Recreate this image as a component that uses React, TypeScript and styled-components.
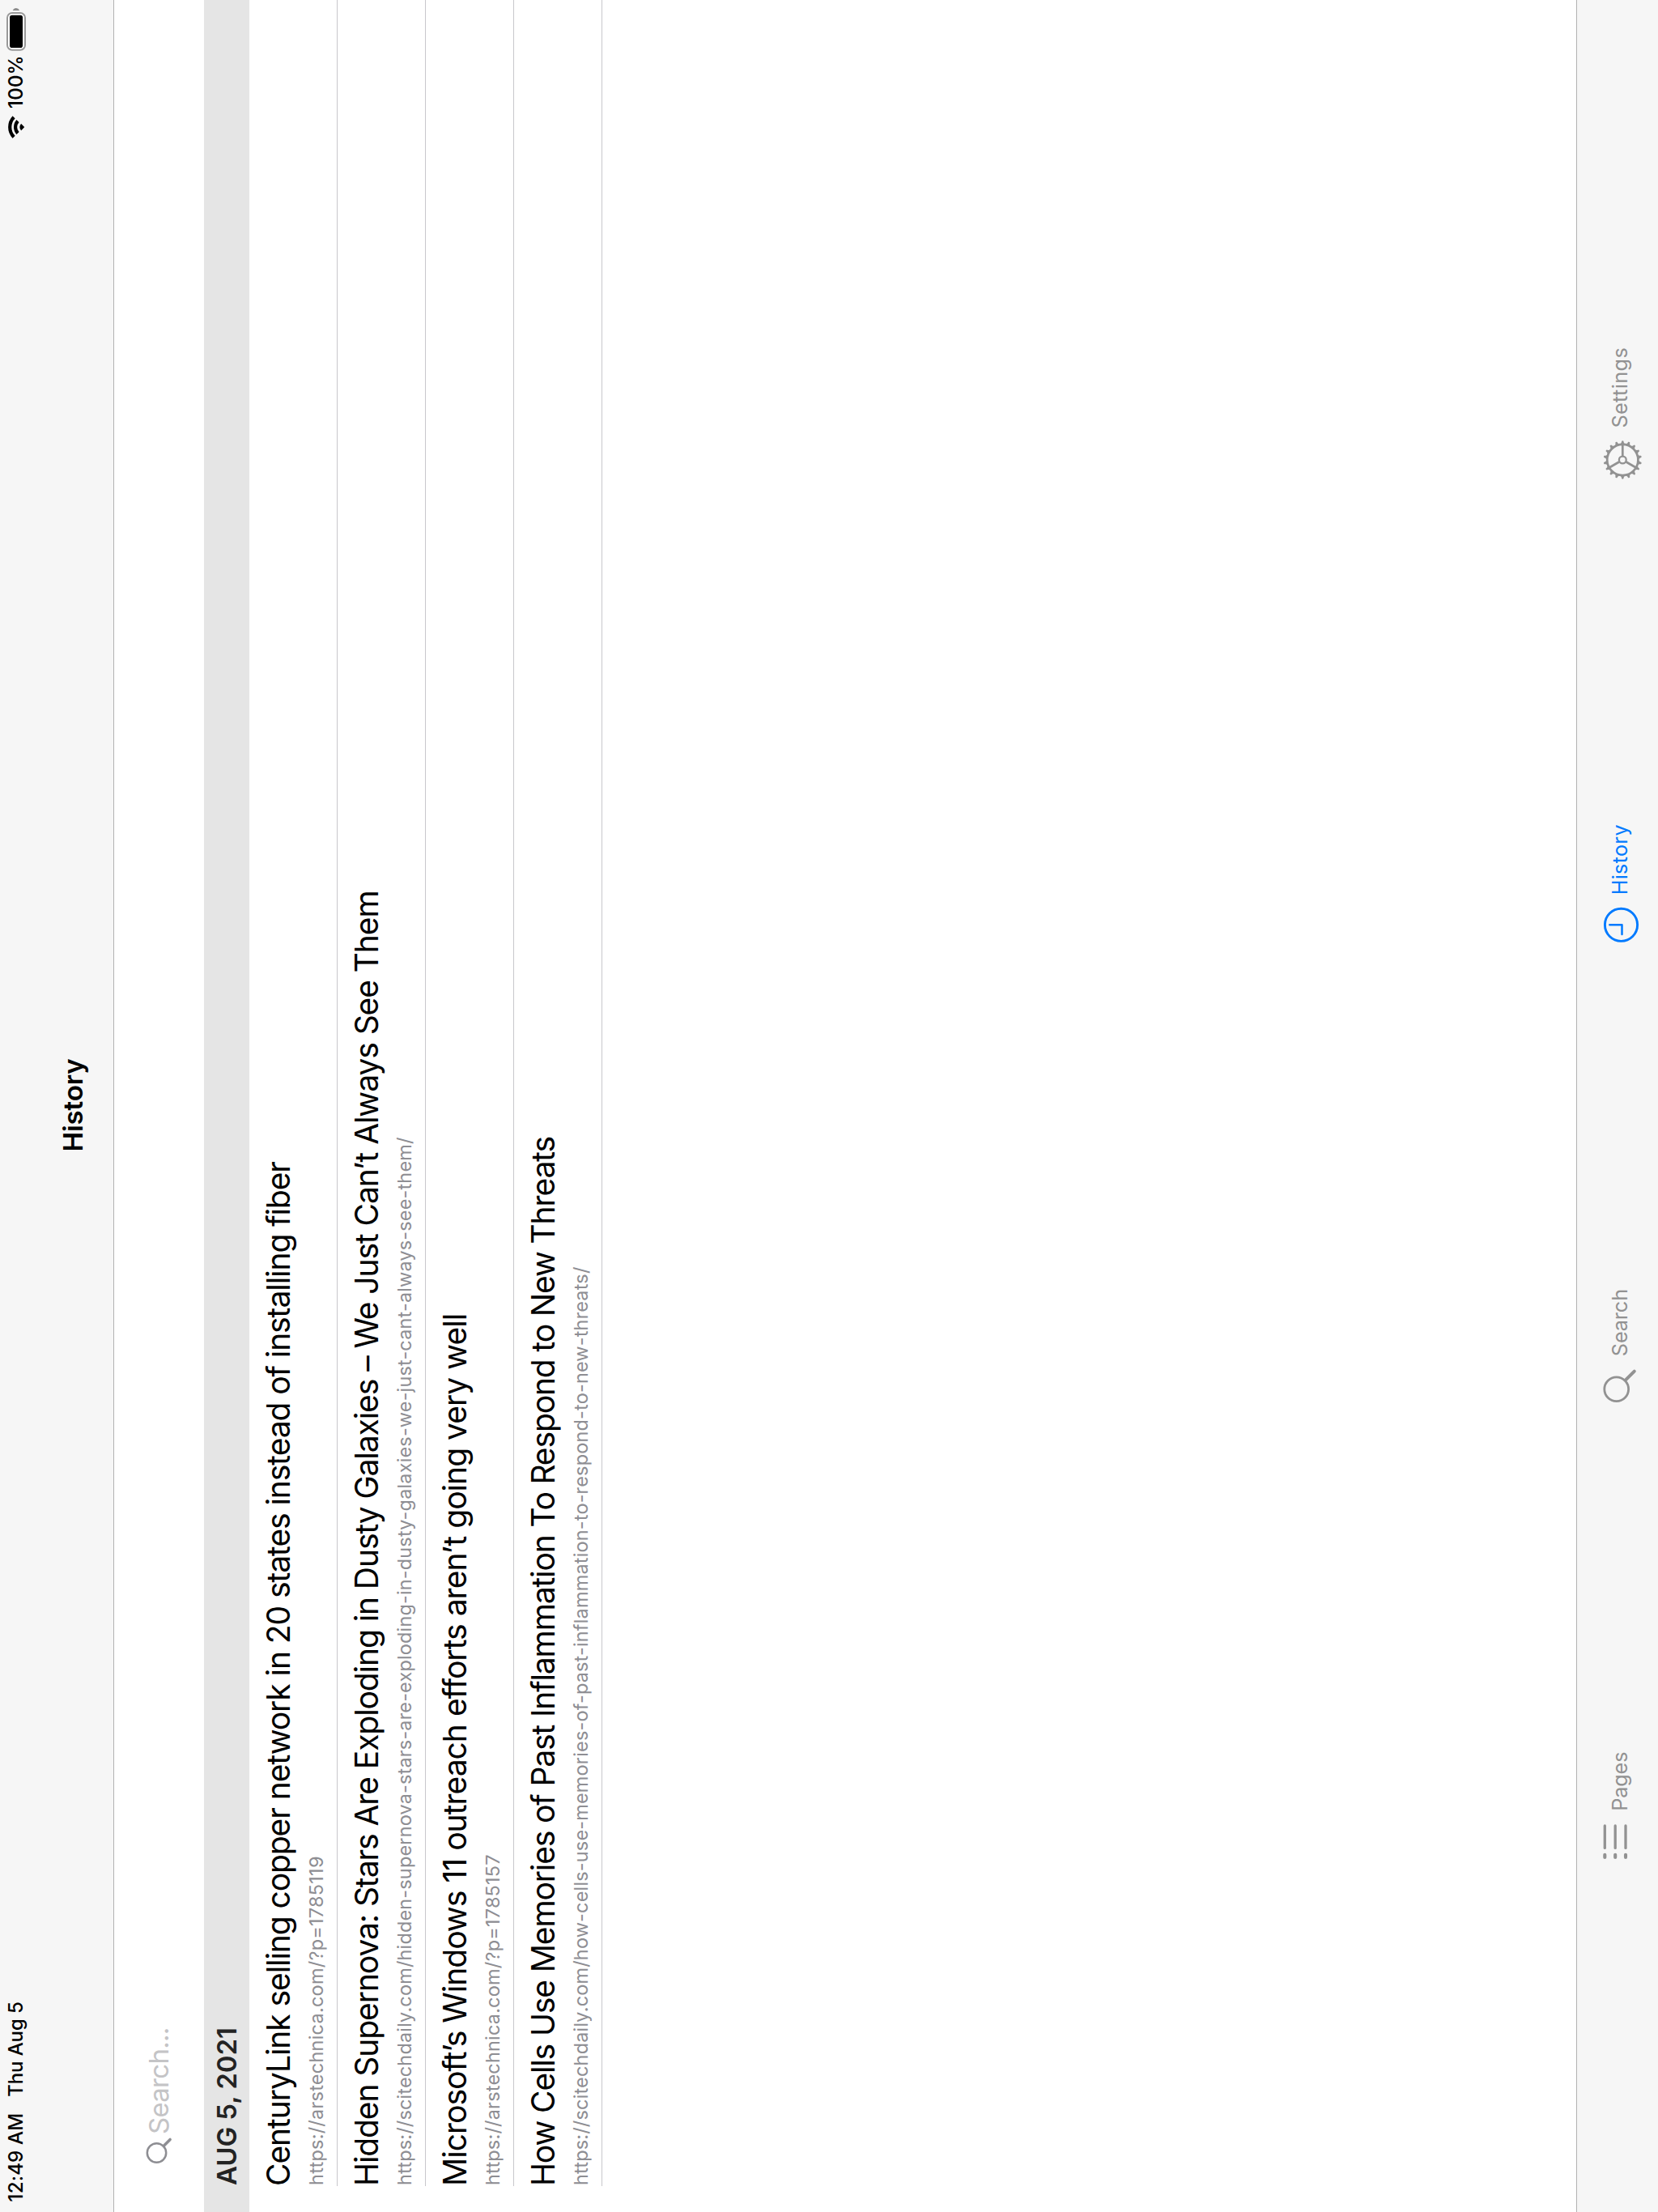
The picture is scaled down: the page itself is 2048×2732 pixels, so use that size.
import React from "react";
import styled, { createGlobalStyle } from "styled-components";

const GlobalStyle = createGlobalStyle`
  html, body { margin: 0; padding: 0; background: #fff; }
  body { overflow: hidden; }
`;

/* The tablet is held in landscape; the frame is turned a quarter to the left. */
const Frame = styled.div`
  width: 2048px;
  height: 2732px;
  overflow: hidden;
`;

const Screen = styled.main`
  width: 2732px;
  height: 2048px;
  display: flex;
  flex-direction: column;
  background: #fff;
  color: #000;
  font-family: Inter, "Liberation Sans", sans-serif;
  transform-origin: 0 0;
  transform: translateY(2732px) rotate(-90deg);

  svg { display: block; flex: none; }
`;

const Text = styled.span<{ $tracking?: number }>`
  display: block;
  white-space: pre;
  letter-spacing: ${(p) => p.$tracking ?? 0}px;
`;

const Header = styled.header`
  box-sizing: border-box;
  flex: none;
  height: 141px;
  background: #f6f6f6;
  border-bottom: 1px solid #b2b2b2;
`;

const StatusBar = styled.div`
  display: flex;
  height: 39px;
  padding: 0 8px 0 12.6px;
  font-size: 24px;
  font-weight: 500;
  line-height: 39px;
`;

const StatusDate = styled(Text)`
  margin-left: 20px;
  flex: 1;
`;

const StatusRight = styled.div`
  display: flex;
  align-items: flex-start;
`;

const Percent = styled(Text)`
  width: 70px;
  margin-left: 8px;
`;

const NavTitle = styled.h1`
  margin: 0;
  padding-left: 2px;
  text-align: center;
  font-size: 33px;
  font-weight: 600;
  line-height: 102px;
  letter-spacing: -0.1px;
`;

const SearchField = styled.div`
  flex: none;
  display: flex;
  height: 111px;
  padding-left: 58px;
  align-items: flex-start;
  font-size: 33px;
  line-height: 111px;
  color: #c4c4c6;

  svg { margin-top: 36px; }
`;

const SectionHeader = styled.h2`
  flex: none;
  margin: 0;
  height: 56px;
  padding-left: 33px;
  background: #e5e5e5;
  color: #232323;
  font-size: 33px;
  font-weight: 600;
  line-height: 56px;
  letter-spacing: -0.08px;
`;

const List = styled.ul`
  flex: 1;
  margin: 0;
  padding: 0 0 0 32px;
  list-style: none;
`;

const Entry = styled.li`
  box-sizing: border-box;
  height: 109px;
  padding-top: 8px;
  border-bottom: 1px solid #c8c7cc;
`;

const EntryTitle = styled(Text)`
  font-size: 39px;
  line-height: 56px;
  margin-bottom: -1px;
`;

const EntryUrl = styled(Text)`
  padding-left: 1px;
  font-size: 23.5px;
  line-height: 39px;
  color: #8e8e93;
`;

const TabBar = styled.nav`
  box-sizing: border-box;
  flex: none;
  display: flex;
  height: 101px;
  padding-left: 436px;
  background: #f6f6f6;
  border-top: 1px solid #b2b2b2;
`;

const Tab = styled.div<{ $width: number; $gap: number; $active?: boolean }>`
  display: flex;
  align-items: flex-start;
  width: ${(p) => p.$width}px;
  gap: ${(p) => p.$gap}px;
  color: ${(p) => (p.$active ? "#007aff" : "#929292")};
  font-size: 25.2px;
  line-height: 106px;

  svg { margin-top: 28px; }
`;

const Wifi = () => (
  <svg width="30" height="39" viewBox="0 0 30 39" fill="none" stroke="#000" strokeWidth="4.2">
    <path d="M2.7 17.1A17.9 17.9 0 0 1 27.3 17.1" />
    <path d="M7.5 22A11 11 0 0 1 22.5 22" />
    <path d="M15 30.2L10.8 26.1A6 6 0 0 1 19.2 26.1Z" fill="#000" stroke="none" />
  </svg>
);

const Battery = () => (
  <svg width="56" height="39" viewBox="0 0 56 39">
    <rect x="2.3" y="9" width="45.7" height="22" rx="6" fill="#fff" stroke="#999" strokeWidth="2" />
    <rect x="5" y="12" width="40.3" height="16" rx="2.8" fill="#000" />
    <path d="M51 15.7Q54 17 54 19.9T51 24.2Z" fill="#8c8c8c" />
  </svg>
);

const FieldGlass = () => (
  <svg width="38" height="42" viewBox="0 0 38 42" fill="none" stroke="#8e8e93">
    <circle cx="15" cy="16.5" r="11.7" strokeWidth="2.5" />
    <path d="M23.6 25.1L31.6 33.1" strokeWidth="3.5" strokeLinecap="round" />
  </svg>
);

const PagesIcon = () => (
  <svg width="44" height="56" viewBox="0 0 44 56" stroke="currentColor" strokeLinecap="round">
    {[6.3, 19.2, 32].map((y) => (
      <g key={y}>
        <path d={`M2.1 ${y}H5.3`} strokeWidth="4.1" />
        <path d={`M13.6 ${y}H41.1`} strokeWidth="3.3" />
      </g>
    ))}
  </svg>
);

const SearchIcon = () => (
  <svg width="44" height="56" viewBox="0 0 44 56" fill="none" stroke="currentColor">
    <circle cx="16.3" cy="20.7" r="14.9" strokeWidth="2.8" />
    <path d="M27.6 32L38.4 42.8" strokeWidth="4" strokeLinecap="round" />
  </svg>
);

const HistoryIcon = () => (
  <svg width="44" height="56" viewBox="0 0 44 56" fill="none" stroke="currentColor">
    <circle cx="21.7" cy="26.5" r="20.1" strokeWidth="2.9" />
    <path d="M21.7 12.3V27.5H10" strokeWidth="2.5" strokeLinecap="round" strokeLinejoin="round" />
  </svg>
);

const SettingsIcon = () => (
  <svg width="48" height="56" viewBox="-24 -28.3 48 56" fill="none" stroke="currentColor">
    <circle r="19.1" strokeWidth="2.7" />
    <circle r="4.4" strokeWidth="2.3" />
    {[0, 120, 240].map((a) => (
      <path key={a} d="M5 0H19" strokeWidth="2.7" transform={`rotate(${a})`} />
    ))}
    {Array.from({ length: 18 }, (_, i) => (
      <path
        key={i}
        d="M19.6 -2.7L21.6 -1.5L23.3 -1.1Q24 0 23.3 1.1L21.6 1.5L19.6 2.7Z"
        fill="currentColor"
        stroke="none"
        transform={`rotate(${i * 20})`}
      />
    ))}
  </svg>
);

const entries = [
  {
    title: "CenturyLink selling copper network in 20 states instead of installing fiber",
    url: "https://arstechnica.com/?p=1785119",
    tracking: [-1.075, 0.23],
  },
  {
    title: "Hidden Supernova: Stars Are Exploding in Dusty Galaxies – We Just Can’t Always See Them",
    url: "https://scitechdaily.com/hidden-supernova-stars-are-exploding-in-dusty-galaxies-we-just-cant-always-see-them/",
    tracking: [-1.085, 0.148],
  },
  {
    title: "Microsoft’s Windows 11 outreach efforts aren’t going very well",
    url: "https://arstechnica.com/?p=1785157",
    tracking: [-0.975, 0.19],
  },
  {
    title: "How Cells Use Memories of Past Inflammation To Respond to New Threats",
    url: "https://scitechdaily.com/how-cells-use-memories-of-past-inflammation-to-respond-to-new-threats/",
    tracking: [-1.13, 0.162],
  },
];

const tabs = [
  { label: "Pages", Icon: PagesIcon, width: 564, gap: 15.2, tracking: -0.08 },
  { label: "Search", Icon: SearchIcon, width: 568, gap: 12.8, tracking: -0.06 },
  { label: "History", Icon: HistoryIcon, width: 572, gap: 14.8, tracking: 0.25, active: true },
  { label: "Settings", Icon: SettingsIcon, width: 400, gap: 15.4, tracking: 0.42 },
];

export default function App() {
  return (
    <>
      <GlobalStyle />
      <Frame>
        <Screen>
          <Header>
            <StatusBar>
              <Text $tracking={0.18}>12:49 AM</Text>
              <StatusDate $tracking={-0.12}>Thu Aug 5</StatusDate>
              <StatusRight>
                <Wifi />
                <Percent $tracking={0.25}>100%</Percent>
                <Battery />
              </StatusRight>
            </StatusBar>
            <NavTitle>History</NavTitle>
          </Header>
          <SearchField>
            <FieldGlass />
            <Text $tracking={-0.72}>Search...</Text>
          </SearchField>
          <SectionHeader>AUG 5, 2021</SectionHeader>
          <List>
            {entries.map((e) => (
              <Entry key={e.url}>
                <EntryTitle $tracking={e.tracking[0]}>{e.title}</EntryTitle>
                <EntryUrl $tracking={e.tracking[1]}>{e.url}</EntryUrl>
              </Entry>
            ))}
          </List>
          <TabBar>
            {tabs.map(({ label, Icon, width, gap, tracking, active }) => (
              <Tab key={label} $width={width} $gap={gap} $active={active}>
                <Icon />
                <Text $tracking={tracking}>{label}</Text>
              </Tab>
            ))}
          </TabBar>
        </Screen>
      </Frame>
    </>
  );
}
